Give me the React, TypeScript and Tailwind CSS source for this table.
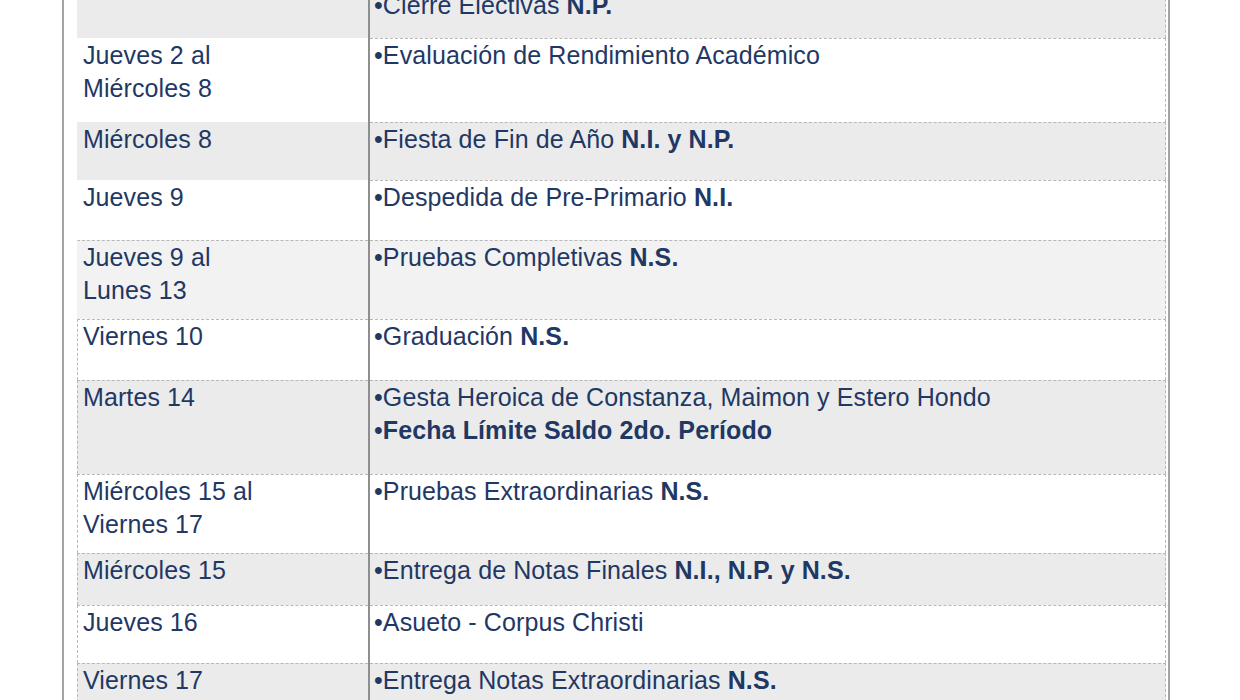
import React from 'react';

type Row = {
  left: string[];
  right: React.ReactNode[];
  height: string;
  bg: string;
  topLine: boolean;
  sideLine: boolean;
};

const B: React.FC<{ children: React.ReactNode }> = ({ children }) => (
  <span className="font-bold">{children}</span>
);

const rows: Row[] = [
  {
    left: [],
    right: [<>•Cierre Electivas <B>N.P.</B></>],
    height: 'h-[50px]',
    bg: 'bg-[#ebebeb]',
    topLine: false,
    sideLine: false,
  },
  {
    left: ['Jueves 2 al', 'Miércoles 8'],
    right: ['•Evaluación de Rendimiento Académico'],
    height: 'h-[84px]',
    bg: 'bg-white',
    topLine: false,
    sideLine: false,
  },
  {
    left: ['Miércoles 8'],
    right: [<>•Fiesta de Fin de Año <B>N.I. y N.P.</B></>],
    height: 'h-[58px]',
    bg: 'bg-[#ebebeb]',
    topLine: false,
    sideLine: false,
  },
  {
    left: ['Jueves 9'],
    right: [<>•Despedida de Pre-Primario <B>N.I.</B></>],
    height: 'h-[60px]',
    bg: 'bg-white',
    topLine: false,
    sideLine: false,
  },
  {
    left: ['Jueves 9 al', 'Lunes 13'],
    right: [<>•Pruebas Completivas <B>N.S.</B></>],
    height: 'h-[79px]',
    bg: 'bg-[#f2f2f2]',
    topLine: true,
    sideLine: false,
  },
  {
    left: ['Viernes 10'],
    right: [<>•Graduación <B>N.S.</B></>],
    height: 'h-[61px]',
    bg: 'bg-white',
    topLine: true,
    sideLine: true,
  },
  {
    left: ['Martes 14'],
    right: [
      '•Gesta Heroica de Constanza, Maimon y Estero Hondo',
      <>•<B>Fecha Límite Saldo 2do. Período</B></>,
    ],
    height: 'h-[94px]',
    bg: 'bg-[#ebebeb]',
    topLine: true,
    sideLine: true,
  },
  {
    left: ['Miércoles 15 al', 'Viernes 17'],
    right: [<>•Pruebas Extraordinarias <B>N.S.</B></>],
    height: 'h-[79px]',
    bg: 'bg-white',
    topLine: true,
    sideLine: true,
  },
  {
    left: ['Miércoles 15'],
    right: [<>•Entrega de Notas Finales <B>N.I., N.P. y N.S.</B></>],
    height: 'h-[52px]',
    bg: 'bg-[#ebebeb]',
    topLine: true,
    sideLine: true,
  },
  {
    left: ['Jueves 16'],
    right: ['•Asueto - Corpus Christi'],
    height: 'h-[58px]',
    bg: 'bg-white',
    topLine: true,
    sideLine: true,
  },
  {
    left: ['Viernes 17'],
    right: [<>•Entrega Notas Extraordinarias <B>N.S.</B></>],
    height: 'h-[60px]',
    bg: 'bg-[#ebebeb]',
    topLine: true,
    sideLine: true,
  },
];

const App: React.FC = () => {
  return (
    <div
      className="h-[700px] overflow-hidden bg-white text-[25px] leading-[33px] tracking-[0.1px] text-[#1f3864]"
      style={{ fontFamily: '"Liberation Sans", Arial, sans-serif' }}
    >
      <div className="ml-[62px] w-[1108px] h-[700px] border-l-2 border-r-2 border-[#a3a3a3] pl-[13px] pr-[2px] overflow-hidden">
        <div className="-mt-[12px]">
          {rows.map((row, idx) => (
            <div key={idx} className={`flex ${row.height}`}>
              <div
                className={`w-[291px] pl-[5px] border-t border-l border-dashed ${
                  row.topLine ? 'border-t-[#b8b8b8]' : 'border-t-transparent'
                } ${row.sideLine ? 'border-l-[#b8b8b8]' : 'border-l-transparent'} ${row.bg}`}
              >
                {row.left.map((line, i) => (
                  <div key={i}>{line}</div>
                ))}
              </div>
              <div className="w-[2px] bg-[#8e8e8e]"></div>
              <div
                className={`flex-1 pl-[4px] border-t border-r border-dashed border-[#b8b8b8] ${row.bg}`}
              >
                {row.right.map((line, i) => (
                  <div key={i}>{line}</div>
                ))}
              </div>
            </div>
          ))}
        </div>
      </div>
    </div>
  );
};

export default App;
